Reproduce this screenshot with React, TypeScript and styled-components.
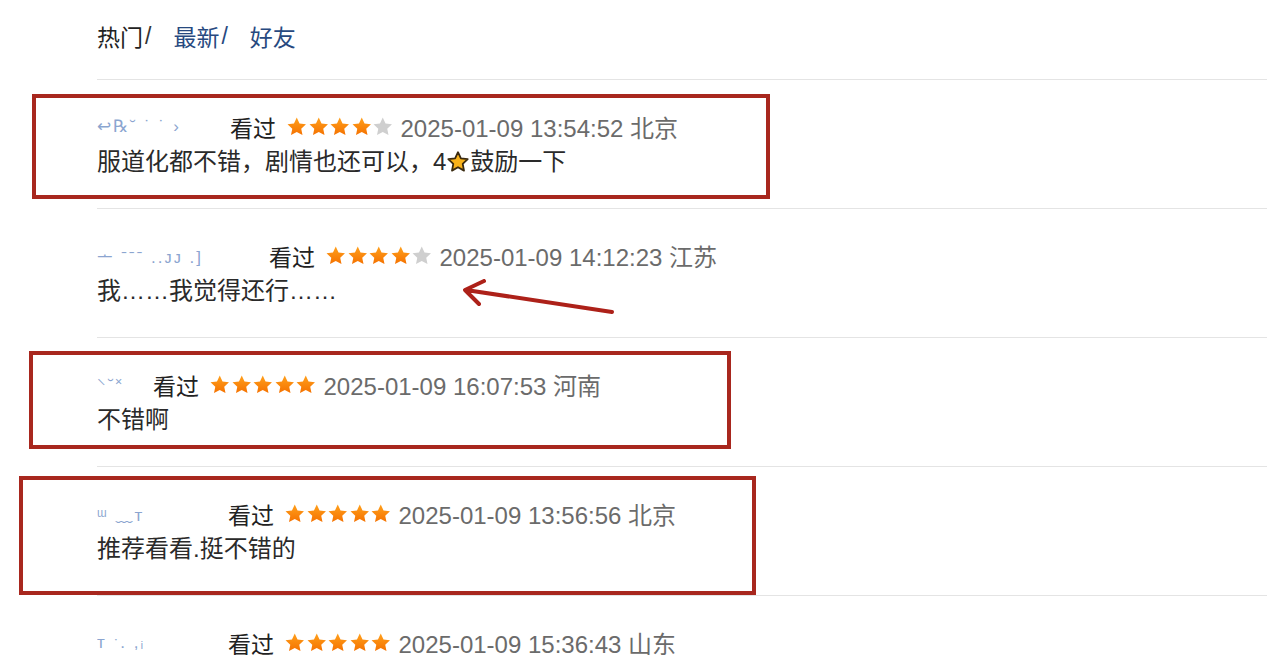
import React from "react";
import styled, { createGlobalStyle } from "styled-components";

const GlobalStyle = createGlobalStyle`
  html, body {
    margin: 0;
    padding: 0;
    background: #fff;
  }
  body {
    font-family: "Liberation Sans", "Noto Sans CJK SC", sans-serif;
    overflow: hidden;
  }
`;

type Review = {
  name: string;
  nameWidth: number;
  stars: number;
  time: string;
  place: string;
  comment: React.ReactNode;
  mark?: { left: number; top: number; width: number; height: number };
  arrow?: boolean;
};

const Star: React.FC<{ on: boolean }> = ({ on }) => (
  <svg width="21.5" height="21" viewBox="0 0 24 23">
    <defs>
      <linearGradient id="starOn" x1="0" y1="0" x2="0" y2="1">
        <stop offset="0" stopColor="#ffa01c" />
        <stop offset="1" stopColor="#f57200" />
      </linearGradient>
    </defs>
    <path
      d="M12 1.5l3.1 6.6 7.2.9-5.3 5 1.4 7.1L12 17.6l-6.4 3.5 1.4-7.1-5.3-5 7.2-.9z"
      fill={on ? "url(#starOn)" : "#cfcfcf"}
    />
  </svg>
);

const EmojiStar = () => (
  <svg width="24" height="24" viewBox="0 0 24 24" style={{ verticalAlign: "-4px" }}>
    <path
      d="M12 2.2l2.9 6.2 6.8.8-5 4.7 1.3 6.7L12 17.2l-6 3.4 1.3-6.7-5-4.7 6.8-.8z"
      fill="#f8b21a"
      stroke="#3a2a10"
      strokeWidth="1.8"
      strokeLinejoin="round"
    />
  </svg>
);

const reviews: Review[] = [
  {
    name: "↩℞˘  ˙ ˙ ›",
    nameWidth: 133,
    stars: 4,
    time: "2025-01-09 13:54:52",
    place: "北京",
    comment: (
      <>
        服道化都不错，剧情也还可以，4<EmojiStar />鼓励一下
      </>
    ),
    mark: { left: -65, top: 14, width: 738, height: 105 },
  },
  {
    name: "ᅩ  ˉˉˉ ..ᴊᴊ .]",
    nameWidth: 172,
    stars: 4,
    time: "2025-01-09 14:12:23",
    place: "江苏",
    comment: "我……我觉得还行……",
    arrow: true,
  },
  {
    name: "⸌˘˟",
    nameWidth: 56,
    stars: 5,
    time: "2025-01-09 16:07:53",
    place: "河南",
    comment: "不错啊",
    mark: { left: -68, top: 13, width: 702, height: 98 },
  },
  {
    name: "ᵚ    ﹏ᴛ",
    nameWidth: 131,
    stars: 5,
    time: "2025-01-09 13:56:56",
    place: "北京",
    comment: "推荐看看.挺不错的",
    mark: { left: -78, top: 9, width: 737, height: 119 },
  },
  {
    name: "ᴛ ˑ.      ,ᵢ",
    nameWidth: 131,
    stars: 5,
    time: "2025-01-09 15:36:43",
    place: "山东",
    comment: "",
  },
];

const App: React.FC = () => (
  <Page>
    <GlobalStyle />
    <Tabs>
      <Tab>热门</Tab>
      <Sep dark>/</Sep>
      <Tab link>最新</Tab>
      <Sep>/</Sep>
      <Tab link>好友</Tab>
    </Tabs>
    <List>
      {reviews.map((r, i) => (
        <Row key={i}>
          <Meta>
            <Name style={{ width: r.nameWidth }}>{r.name}</Name>
            <Seen>看过</Seen>
            <Stars>
              {[0, 1, 2, 3, 4].map((s) => (
                <Star key={s} on={s < r.stars} />
              ))}
            </Stars>
            <Time>
              {r.time} {r.place}
            </Time>
          </Meta>
          {r.comment && <Comment>{r.comment}</Comment>}
          {r.mark && (
            <Mark
              style={{
                left: r.mark.left,
                top: r.mark.top,
                width: r.mark.width,
                height: r.mark.height,
              }}
            />
          )}
          {r.arrow && (
            <Arrow width="170" height="40" viewBox="0 0 170 40">
              <path
                d="M158 33 L12 11 M30 2 L11 11 L25 25"
                fill="none"
                stroke="#ad2119"
                strokeWidth="4"
                strokeLinecap="round"
                strokeLinejoin="round"
              />
            </Arrow>
          )}
        </Row>
      ))}
    </List>
  </Page>
);

export default App;

const Page = styled.div`
  width: 1267px;
  height: 655px;
  overflow: hidden;
  padding-left: 97px;
  box-sizing: border-box;
`;

const Tabs = styled.div`
  display: flex;
  align-items: center;
  height: 79px;
  padding-bottom: 7px;
  box-sizing: border-box;
  font-size: 23px;
`;

const Tab = styled.span<{ link?: boolean }>`
  color: ${(p) => (p.link ? "#27497f" : "#222")};
`;

const Sep = styled.span<{ dark?: boolean }>`
  color: ${(p) => (p.dark ? "#333" : "#27497f")};
  margin: 0 22px 0 2px;
`;

const List = styled.div`
  display: flex;
  flex-direction: column;
`;

const Row = styled.div`
  position: relative;
  border-top: 1px solid #e4e4e4;
  padding: 29px 0 29px;
  height: 70px;
`;

const Meta = styled.div`
  display: flex;
  align-items: center;
  height: 35px;
  font-size: 23px;
  white-space: nowrap;
`;

const Name = styled.span`
  color: #5b7fbd;
  opacity: 0.7;
  font-size: 17px;
  letter-spacing: 2px;
  overflow: hidden;
  flex-shrink: 0;
`;

const Seen = styled.span`
  color: #222;
  font-size: 23px;
`;

const Stars = styled.span`
  display: inline-flex;
  margin: 0 7px 0 10px;
  svg {
    display: block;
  }
`;

const Time = styled.span`
  color: #6b6b6b;
  font-size: 24px;
`;

const Comment = styled.div`
  height: 35px;
  line-height: 35px;
  font-size: 24px;
  color: #2a2a2a;
  white-space: nowrap;
`;

const Mark = styled.div`
  position: absolute;
  border: 4px solid #a8271e;
  box-sizing: border-box;
  pointer-events: none;
`;

const Arrow = styled.svg`
  position: absolute;
  left: 357px;
  top: 70px;
`;
